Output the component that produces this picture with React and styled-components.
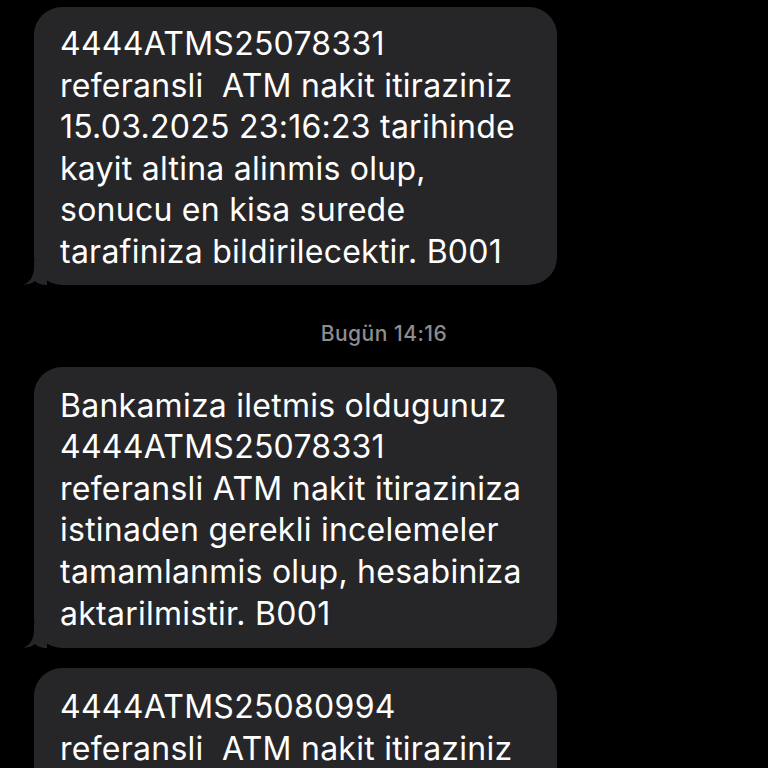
import React from 'react';
import styled, { createGlobalStyle } from 'styled-components';

const GlobalStyle = createGlobalStyle`
  html, body {
    margin: 0;
    padding: 0;
    background: #000;
    height: 768px;
    overflow: hidden;
  }
  body {
    font-family: Inter, "Liberation Sans", sans-serif;
    -webkit-font-smoothing: antialiased;
  }
`;

const Thread = styled.div`
  display: flex;
  flex-direction: column;
  align-items: flex-start;
  padding: 7px 0 0 34px;
  width: 768px;
  box-sizing: border-box;
`;

const Bubble = styled.div`
  position: relative;
  width: 523px;
  box-sizing: border-box;
  padding: ${p => (p.$first ? '16px 20px 12px 26px' : '18px 20px 14px 26px')};
  margin-top: ${p => p.$gap || 0}px;
  background: #262628;
  border-radius: 28px;
  color: #fff;
  font-size: 32px;
  line-height: 41.6px;
  letter-spacing: 0.25px;
  white-space: pre;
`;

const Line = styled.div``;

const Tail = styled.svg`
  position: absolute;
  left: -11px;
  bottom: 0;
  width: 30px;
  height: 24px;
`;

const Stamp = styled.div`
  align-self: stretch;
  margin: 37px 34px 21px 0;
  text-align: center;
  color: #8d8d92;
  font-size: 21px;
  font-weight: 500;
  letter-spacing: 0.5px;
  line-height: 24px;
`;

const messages = [
  [
    '4444ATMS25078331',
    'referansli  ATM nakit itiraziniz',
    '15.03.2025 23:16:23 tarihinde',
    'kayit altina alinmis olup,',
    'sonucu en kisa surede',
    'tarafiniza bildirilecektir. B001',
  ],
  [
    'Bankamiza iletmis oldugunuz',
    '4444ATMS25078331',
    'referansli ATM nakit itiraziniza',
    'istinaden gerekli incelemeler',
    'tamamlanmis olup, hesabiniza',
    'aktarilmistir. B001',
  ],
  [
    '4444ATMS25080994',
    'referansli  ATM nakit itiraziniz',
    '15.03.2025 23:16:23 tarihinde',
  ],
];

function BubbleTail() {
  return (
    <Tail viewBox="0 0 30 24">
      <path d="M0 23.5 C6 22 10 17 11 8 L11 0 L24 0 L24 24 C18 24 14 22 12 20 C9 22.5 5 24 0 23.5 Z" fill="#262628" />
    </Tail>
  );
}

export default function App() {
  return (
    <>
      <GlobalStyle />
      <Thread>
        <Bubble $first>
          {messages[0].map((l, i) => <Line key={i}>{l}</Line>)}
          <BubbleTail />
        </Bubble>
        <Stamp>Bugün 14:16</Stamp>
        <Bubble>
          {messages[1].map((l, i) => <Line key={i}>{l}</Line>)}
          <BubbleTail />
        </Bubble>
        <Bubble $gap={20}>
          {messages[2].map((l, i) => <Line key={i}>{l}</Line>)}
        </Bubble>
      </Thread>
    </>
  );
}
